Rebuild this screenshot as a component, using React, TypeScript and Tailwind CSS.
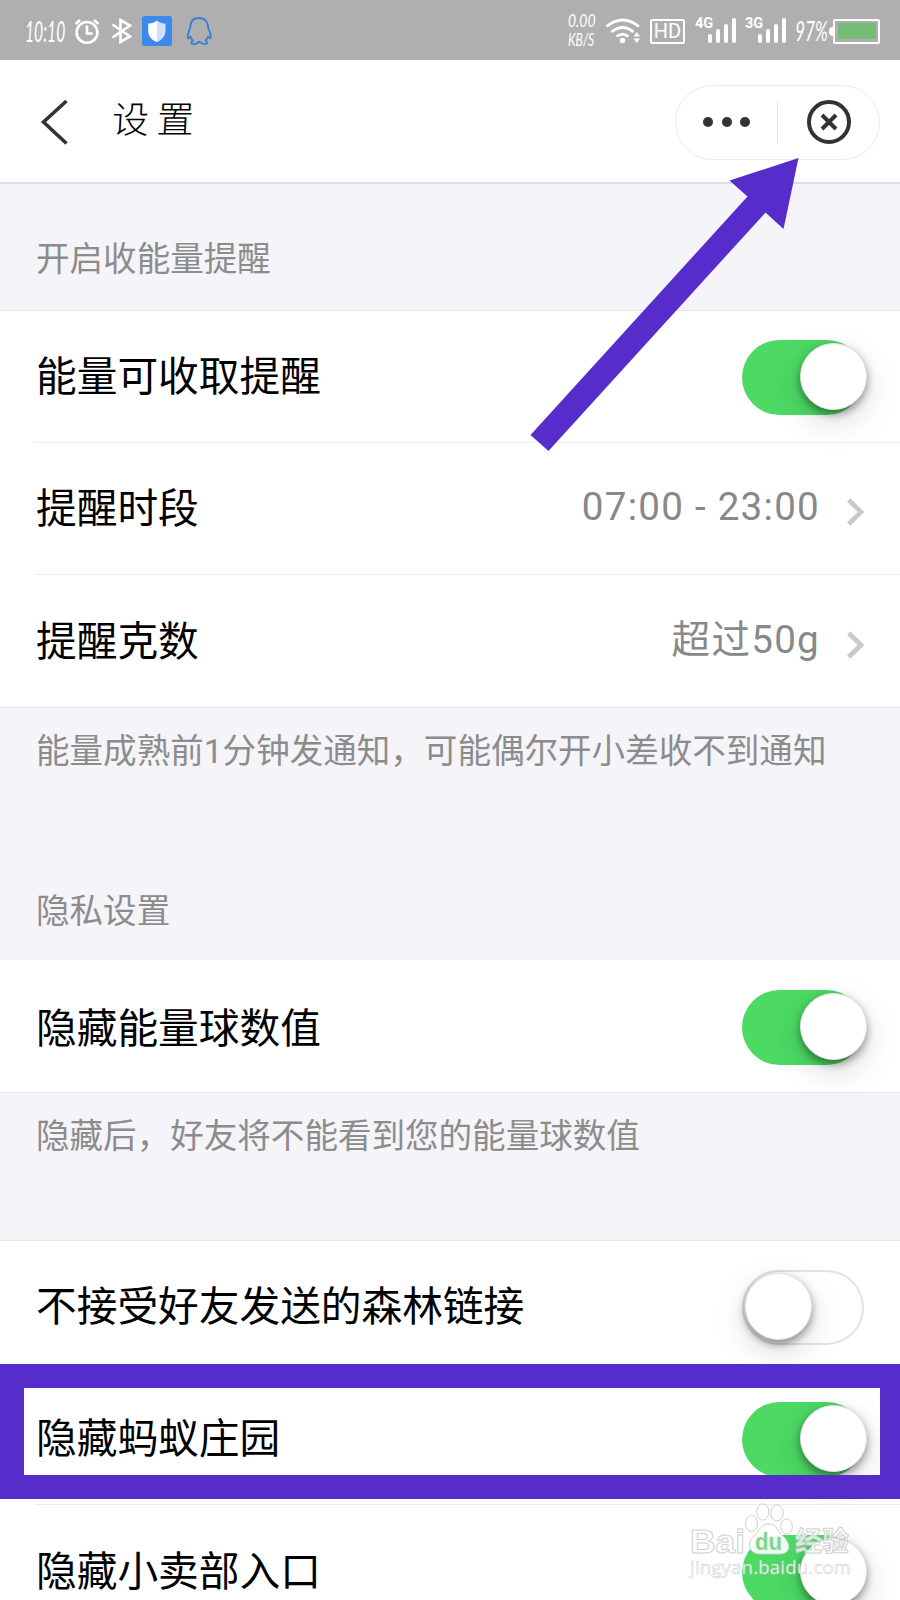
import React from 'react';
import clsx from 'clsx';

function Toggle({ on }: { on: boolean }) {
  return (
    <div
      className={clsx(
        'relative z-10 h-[75px] w-[122px] shrink-0 rounded-full',
        on ? 'bg-[#4cd964]' : 'border-[2.5px] border-[#e3e3e3] bg-white'
      )}
    >
      <div
        className={clsx(
          'absolute h-[67px] w-[67px] rounded-full border border-[#e6e6e6] bg-white',
          'shadow-[0_4px_9px_rgba(0,0,0,0.4),0_12px_34px_rgba(0,0,0,0.14)]',
          on ? 'left-[58px] top-[3px]' : 'left-[1px] top-[1px]'
        )}
      />
    </div>
  );
}

function Chevron() {
  return (
    <svg className="mt-[7px] h-7 w-[18px] shrink-0" viewBox="0 0 18 28" fill="none" stroke="#c9c9c9" strokeWidth="4.8">
      <path d="M1.7 2L14 14L1.7 26" />
    </svg>
  );
}

type RowProps = { title: string; value?: string; on?: boolean; last?: boolean; titleClass?: string };

function Row({ title, value, on, last, titleClass = 'pt-[2px]' }: RowProps) {
  return (
    <div className="flex h-[132px] shrink-0 pl-[35px]">
      <div className={clsx('flex flex-1 items-center', !last && 'border-b-[1.5px] border-[#ececee]')}>
        <div className={clsx('flex-1 pl-px text-[40.7px] leading-none text-black', titleClass)}>{title}</div>
        {value ? (
          <div className="flex items-center gap-[27px] pr-[35px]">
            <span className="-mt-[2px] text-[38.6px] leading-none tracking-[1.25px] text-[#888]">{value}</span>
            <Chevron />
          </div>
        ) : (
          <div className="pr-9 pt-[2px]">
            <Toggle on={!!on} />
          </div>
        )}
      </div>
    </div>
  );
}

function Note({ children }: { children: React.ReactNode }) {
  return <div className="pl-9 text-[33.55px] leading-[40px] text-[#8c8c8c]">{children}</div>;
}

function Signal({ label }: { label: string }) {
  return (
    <div className="flex h-[26px] w-[41px] items-end">
      <span className="-mr-[5px] mb-[12px] text-[14.5px] font-bold leading-[14px]">{label}</span>
      <div className="flex items-end gap-[4px]">
        <i className="h-[9px] w-[4px] rounded-sm bg-white" />
        <i className="h-[14px] w-[4px] rounded-sm bg-white" />
        <i className="h-[19px] w-[4px] rounded-sm bg-white" />
        <i className="h-[25px] w-[4px] rounded-sm bg-white" />
      </div>
    </div>
  );
}

function StatusBar() {
  return (
    <div className="flex h-[60px] shrink-0 items-center bg-[#afafaf] pl-[25px] pr-5 text-white">
      <span className="w-[50px] origin-left scale-x-[0.56] whitespace-nowrap pt-[1px] font-['Lato'] text-[28px] italic leading-none">10:10</span>
      <svg className="-ml-px mt-[2px] h-[30px] w-[26px]" viewBox="74 16 26 30" fill="none" stroke="white" strokeWidth="2.6">
        <circle cx="87" cy="32.4" r="10.4" />
        <path d="M87 25.5V33.5H92.5M75.5 24L80 20M98.5 24L94 20" />
      </svg>
      <svg className="ml-[11px] mt-[2px] h-[30px] w-[21px]" viewBox="111 16 21 30" fill="none" stroke="white" strokeWidth="2.6">
        <path d="M112.5 24.5L130 36.5L120.5 42V20L130 25.5L112.5 37.5" />
      </svg>
      <svg className="ml-[10px] mt-[2px] h-[30px] w-[30px]" viewBox="0 0 30 30">
        <rect width="30" height="30" rx="2.5" fill="#3d89eb" />
        <path d="M15 4.5C12 7 9 7.5 6.2 7.5V14C6.2 20 9.5 24 15 26Z" fill="white" />
        <path d="M15 4.5C18 7 21 7.5 23.5 7.5V14C23.5 20 20 24 15 26Z" fill="#cfe0fa" />
      </svg>
      <svg className="ml-[14px] mt-[2px] h-[30px] w-[26px]" viewBox="186 16 26 30" fill="none" stroke="#367fd8" strokeWidth="1.8" strokeLinejoin="round">
        <path d="M199 18C193 18 190.2 22 190.2 28C189 31 187.5 33.5 187.7 37.5C188 39.5 189.8 37.5 190.5 36.5C191 38.5 192 39.7 193 40.5C190.5 41.8 190.5 43.8 193.5 44C196 44.2 197.5 43.3 198.2 42H200.2C201 43.3 202.5 44.2 205 44C208 43.8 208 41.8 205.5 40.5C206.5 39.7 207.5 38.5 208 36.5C208.8 37.5 210.5 39.5 210.8 37.5C211 33.5 209.3 31 208.2 28C208.2 22 205 18 199 18Z" />
      </svg>

      <div className="ml-auto flex h-[34px] w-[28px] flex-col justify-between font-['Lato'] text-[17px] italic leading-[15px]">
        <span className="origin-left scale-x-[0.82] whitespace-nowrap">0.00</span>
        <span className="origin-left scale-x-[0.72] whitespace-nowrap">KB/S</span>
      </div>
      <svg className="ml-[9px] mt-[2px] h-[28px] w-[36px]" viewBox="605 17 36 28" fill="none" stroke="white" strokeWidth="2.8">
        <path d="M606.5 26.5Q622.5 13.5 639 26.5M611.5 32Q622.5 23 633.5 32M616.5 36.5Q622.5 32 628.5 36.5" />
        <circle cx="622.5" cy="40.5" r="2.8" fill="white" stroke="none" />
        <path d="M633.5 36.5L636.8 32L640 36.5ZM633.5 38.5L636.8 43L640 38.5Z" fill="white" stroke="none" />
      </svg>
      <div className="ml-[9px] mt-[2px] flex h-[25px] w-[35px] items-center justify-center rounded-[2px] border-2 border-white text-[20px] leading-none">HD</div>
      <div className="ml-[10px]">
        <Signal label="4G" />
      </div>
      <div className="ml-[9px]">
        <Signal label="3G" />
      </div>
      <span className="ml-[9px] w-[34px] origin-left scale-x-[0.64] whitespace-nowrap pt-[1px] font-['Lato'] text-[27px] italic leading-none">97%</span>
      <div className="mt-[2px] h-[9px] w-[4px] rounded-l-sm bg-white" />
      <div className="mt-[2px] h-[25px] w-[47px] rounded-[2px] border-2 border-white p-[2.5px]">
        <div className="h-full bg-[#75bb74]" />
      </div>
    </div>
  );
}

function Header() {
  return (
    <div className="flex h-[124px] shrink-0 items-center border-b-2 border-[#dedee2] bg-white pl-10 pr-5 pt-[2px]">
      <svg className="h-[46px] w-[28px]" viewBox="0 0 28 46" fill="none" stroke="#333" strokeWidth="3.6">
        <path d="M26.5 2L3.5 23L26.5 44.5" />
      </svg>
      <h1 className="ml-[44px] -translate-y-[5px] -skew-x-3 font-['Noto_Sans_CJK_SC'] text-[37px] font-light leading-none tracking-[8px] text-black">设置</h1>
      <div className="ml-auto flex h-[75px] w-[205px] items-center rounded-full border-[1.5px] border-[#ebebeb]">
        <div className="flex flex-1 items-center justify-center gap-[8.5px] pl-[1px]">
          <i className="h-[10px] w-[10px] rounded-full bg-[#333]" />
          <i className="h-[10px] w-[10px] rounded-full bg-[#333]" />
          <i className="h-[10px] w-[10px] rounded-full bg-[#333]" />
        </div>
        <div className="h-[41px] w-[1.5px] bg-[#e6e6e6]" />
        <div className="flex w-[101px] justify-center">
          <svg className="-mt-[1px] h-[44px] w-[44px]" viewBox="0 0 44 44" fill="none" stroke="#333" strokeWidth="4">
            <circle cx="22" cy="22" r="20" />
            <path d="M15 15L29 29M29 15L15 29" />
          </svg>
        </div>
      </div>
    </div>
  );
}

function Watermark() {
  return (
    <svg className="absolute left-[680px] top-[1500px] z-30 h-[84px] w-[180px]" viewBox="680 1500 180 84">
      <g fill="white" fillOpacity="0.75" stroke="#d0d0d0" strokeWidth="1">
        <ellipse cx="751.5" cy="1523.5" rx="6" ry="8.2" />
        <ellipse cx="762.8" cy="1512" rx="6" ry="8.2" />
        <ellipse cx="777" cy="1513" rx="6.2" ry="8" />
        <ellipse cx="786.5" cy="1526.5" rx="5.8" ry="7.6" />
        <path d="M769 1524C760 1524 760 1531 754 1536C746 1543 749 1554 760 1554H780C791 1554 791 1543 783 1536C777 1531 777 1524 769 1524Z" fillOpacity="0.9" />
        <text x="690" y="1553" fontSize="34" fontWeight="bold" textLength="55" lengthAdjust="spacingAndGlyphs" fontFamily="Liberation Sans, sans-serif">Bai</text>
        <text x="795" y="1551" fontSize="27" fontWeight="bold" textLength="54" lengthAdjust="spacingAndGlyphs" fontFamily="Noto Sans CJK SC, sans-serif">经验</text>
      </g>
      <text x="755" y="1550" fontSize="24" fontWeight="bold" fill="#6fdc82" stroke="#d0d0d0" strokeWidth="0.6" textLength="27" lengthAdjust="spacingAndGlyphs" fontFamily="Liberation Sans, sans-serif">du</text>
      <text x="690" y="1574" fontSize="18.5" fill="white" fillOpacity="0.9" stroke="#cccccc" strokeWidth="0.5" textLength="161" fontFamily="Open Sans, sans-serif">jingyan.baidu.com</text>
    </svg>
  );
}

export default function App() {
  return (
    <div className="relative flex h-[1600px] w-[900px] flex-col overflow-hidden bg-[#f4f4f9] font-['Roboto','Noto_Sans_CJK_SC',sans-serif]">
      <StatusBar />
      <Header />

      <div className="h-[126px] shrink-0 pt-[56px]">
        <Note>开启收能量提醒</Note>
      </div>
      <div className="border-y-[1.5px] border-[#e5e5e8] bg-white">
        <Row title="能量可收取提醒" on titleClass="pt-[1px]" />
        <Row title="提醒时段" value="07:00 - 23:00" />
        <Row title="提醒克数" value="超过50g" last />
      </div>

      <div className="h-[252px] shrink-0 pt-[24px]">
        <Note>能量成熟前1分钟发通知，可能偶尔开小差收不到通知</Note>
        <div className="pt-[120px]">
          <Note>隐私设置</Note>
        </div>
      </div>
      <div className="border-b-[1.5px] border-[#e5e5e8] bg-white">
        <Row title="隐藏能量球数值" on last titleClass="pt-[7px]" />
      </div>

      <div className="h-[147px] shrink-0 pt-[24px]">
        <Note>隐藏后，好友将不能看到您的能量球数值</Note>
      </div>
      <div className="border-t-[1.5px] border-[#e5e5e8] bg-white">
        <Row title="不接受好友发送的森林链接" on={false} />
        <Row title="隐藏蚂蚁庄园" on />
        <Row title="隐藏小卖部入口" on last />
      </div>

      {/* annotations drawn over the page */}
      <div className="absolute left-0 top-[1364px] z-20 h-[135px] w-[904px] border-[24px] border-[#562ccb]" />
      <svg className="absolute left-[520px] top-[150px] z-20 h-[310px] w-[290px]" viewBox="520 150 290 310">
        <path d="M798.5 158L729.5 180.5L747.5 196.5L530.5 435L548.5 451L765.5 212.5L783.5 229Z" fill="#562ccb" />
      </svg>
      <Watermark />
    </div>
  );
}
